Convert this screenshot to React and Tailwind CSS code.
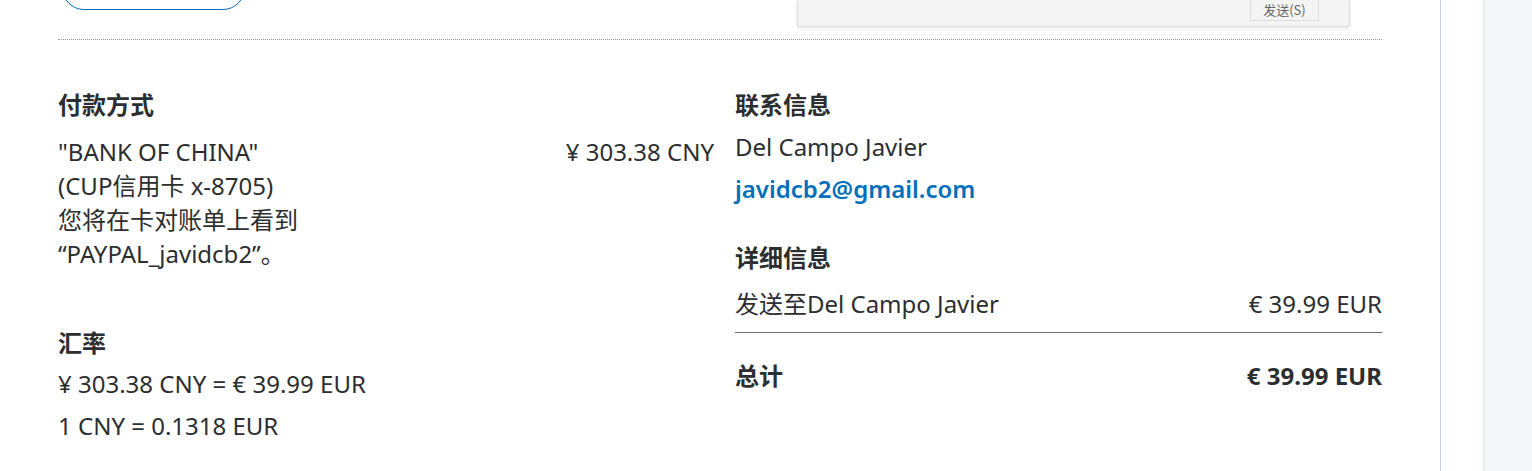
export default function App() {
  return (
    <div className="flex h-[471px] overflow-hidden bg-white text-[#2c2e2f] font-['Noto_Sans','Noto_Sans_CJK_SC',sans-serif]">
      {/* main column */}
      <div className="relative w-[1441px] shrink-0 border-r border-[#cbd2d9] pl-[58px] pr-[58px]">
        {/* chat popup (overlaid, cut at top) */}
        <div className="absolute left-[797px] top-0 h-[27px] w-[553px] rounded-b-[3px] border border-t-0 border-[#dcdcdc] bg-[#f4f4f4] shadow-[0_2px_4px_rgba(0,0,0,0.08)]">
          <div className="absolute right-[30px] top-0 flex h-[21px] w-[69px] items-center justify-center border border-t-0 border-[#dddddd] bg-[#f4f4f4] text-[13px] text-[#666] font-['Noto_Sans_CJK_SC',sans-serif]">
            发送(S)
          </div>
        </div>

        {/* button cut off at top */}
        <div className="-mt-[34px] ml-[4px] h-[44px] w-[183px] rounded-full border border-[#0070ba]" />

        <div className="mt-[29px] border-t border-dotted border-[#9a9a9a]" />

        <div className="flex gap-[21px] pt-[49px]">
          {/* left */}
          <div className="w-[656px]">
            <h2 className="text-[24px] font-bold leading-[32px]">付款方式</h2>
            <div className="mt-[14px] flex justify-between text-[24px] leading-[34px]">
              <div>
                <p>"BANK OF CHINA"</p>
                <p>(CUP信用卡 x-8705)</p>
                <p>您将在卡对账单上看到</p>
                <p>“PAYPAL_javidcb2”。</p>
              </div>
              <p>¥ 303.38 CNY</p>
            </div>

            <h2 className="mt-[56px] text-[24px] font-bold leading-[32px]">汇率</h2>
            <p className="mt-[8px] text-[24px] leading-[34px]">¥ 303.38 CNY = € 39.99 EUR</p>
            <p className="mt-[8px] text-[24px] leading-[34px]">1 CNY = 0.1318 EUR</p>
          </div>

          {/* right */}
          <div className="flex-1">
            <h2 className="text-[24px] font-bold leading-[32px]">联系信息</h2>
            <p className="mt-[9px] text-[24px] leading-[34px]">Del Campo Javier</p>
            <p className="mt-[8px] text-[24px] font-semibold leading-[34px] text-[#0070ba]">javidcb2@gmail.com</p>

            <h2 className="mt-[36px] text-[24px] font-bold leading-[32px]">详细信息</h2>
            <div className="mt-[13px] flex justify-between border-b border-[#6b6f73] pb-[11px] text-[24px] leading-[34px]">
              <span>发送至Del Campo Javier</span>
              <span>€ 39.99 EUR</span>
            </div>
            <div className="mt-[26px] flex justify-between text-[24px] font-bold leading-[34px]">
              <span>总计</span>
              <span>€ 39.99 EUR</span>
            </div>
          </div>
        </div>
      </div>

      {/* narrow white gutter */}
      <div className="w-[43px] shrink-0 border-r border-[#e3e6ea] bg-white" />

      {/* right panel */}
      <div className="flex-1 bg-[#f5f6fa]" />
    </div>
  )
}
